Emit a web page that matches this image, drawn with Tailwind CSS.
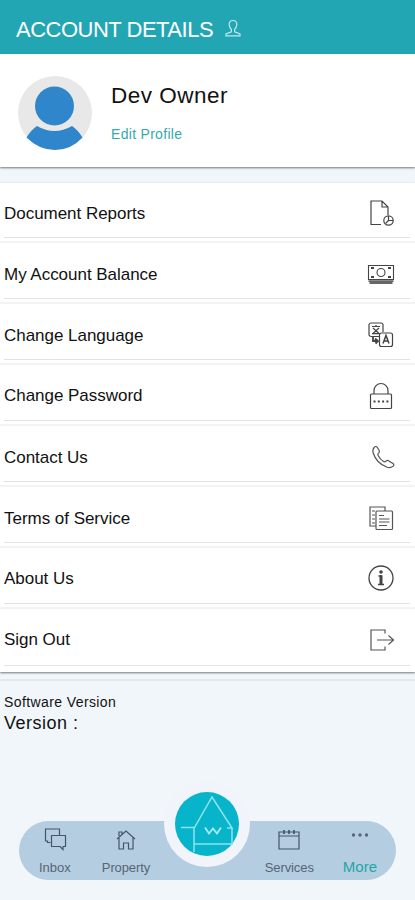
<!DOCTYPE html>
<html lang="en">
  <head>
    <meta charset="UTF-8" />
    <meta name="viewport" content="width=device-width, initial-scale=1.0" />
    <script src="https://cdn.jsdelivr.net/npm/@tailwindcss/browser@4"></script>
    <title>Account Details</title>
  </head>
  <body
    class="h-[900px] w-[415px] flex flex-col overflow-hidden bg-[#f1f6fa] font-['Liberation_Sans',Arial,sans-serif] text-[#111]"
  >
    <header class="h-[54px] shrink-0 flex items-center bg-[#23a6b3] pl-4 pt-[6px] text-white">
      <h1 class="text-[22px] leading-6 tracking-[-0.5px]">ACCOUNT DETAILS</h1>
      <svg class="ml-[11px] mb-1 h-[18px] w-[18px]" viewBox="0 0 18 18" fill="none" stroke="#c3e8ec" stroke-width="1.2">
        <path d="M9 1.500c-2.600 0-4 1.500-3.800 4 .2 2.500 1 4 2.200 5v2.300L2 15v1.800h14V15l-5.400-2.200v-2.300c1.200-1 2-2.500 2.200-5 .2-2.500-1.200-4-3.800-4z" />
      </svg>
    </header>

    <section class="h-[113px] shrink-0 flex bg-white pl-[18px] pt-[22px] shadow-[0_1px_2px_#777]">
      <svg class="h-[74px] w-[74px]" viewBox="0 0 74 74">
        <circle cx="37" cy="37" r="37" fill="#e8e8e8" />
        <circle cx="36.500" cy="30" r="19.500" fill="#2f86cb" />
        <path d="M19 50Q36.500 60 54 50Q60 54 64.500 61.500Q53 74 37 74T8.500 61.500Q13 54 19 50z" fill="#2f86cb" />
      </svg>
      <div class="ml-[19px] pt-[6px]">
        <h2 class="text-[22.5px] leading-7 tracking-[0.5px]">Dev Owner</h2>
        <a class="mt-[14px] block text-sm leading-5 tracking-[0.3px] text-[#35aaae]">Edit Profile</a>
      </div>
    </section>

    <ul class="mt-4 shrink-0 flex flex-col bg-white text-[17px] tracking-[-0.03px] shadow-[0_1px_2px_#777]">
      <li class="h-[60px] flex flex-col border-b-2 border-[#f3f3f3] pl-1 pr-[5px] pb-[3px]">
        <div class="grow flex items-center justify-between border-b border-[#e2e2e2] pr-[15px] pt-[6px]">
          <span class="pt-px">Document Reports</span>
          <svg class="h-7 w-7" viewBox="0 0 28 28" fill="none" stroke="#444" stroke-width="1.200">
            <path d="M14 25.500H4V2h11l6 6v8M15 2v6h6" />
            <circle cx="21.500" cy="21.500" r="4.700" />
            <path d="M21.500 17v4.500H26M21.500 21.500l-3 3" />
          </svg>
        </div>
      </li>
      <li class="h-[61px] flex flex-col border-b-2 border-[#f3f3f3] pl-1 pr-[5px] pb-[3px]">
        <div class="grow flex items-center justify-between border-b border-[#e2e2e2] pr-[15px] pt-[7px]">
          <span class="pt-px">My Account Balance</span>
          <svg class="h-7 w-7" viewBox="0 0 28 28" fill="none" stroke="#444" stroke-width="1.100">
            <path d="M1.500 5.500h25v14h-25z" />
            <path d="M1.500 21.200h25M2.500 23h23" stroke="#666" stroke-width="1.800" />
            <circle cx="14" cy="12.500" r="4" />
            <path d="M4 8h3M21 8h3M4 17h3M21 17h3" stroke-width="1.800" />
          </svg>
        </div>
      </li>
      <li class="h-[61px] flex flex-col border-b-2 border-[#f3f3f3] pl-1 pr-[5px] pb-[3px]">
        <div class="grow flex items-center justify-between border-b border-[#e2e2e2] pr-[15px] pt-[7px]">
          <span class="pt-[2px]">Change Language</span>
          <svg class="h-7 w-7" viewBox="0 0 28 28" fill="none" stroke="#444" stroke-width="1.200">
            <path d="M12 15.500H4a2 2 0 0 1-2-2V4a2 2 0 0 1 2-2h10a2 2 0 0 1 2 2v7" />
            <rect x="12.500" y="12" width="13" height="13.500" rx="2" />
            <path d="M5 5.500h8M9 4v1.500M6 12.500l6-5.500M6 7l6 5.500M5 12.700h8" />
            <path d="M16 22.500l3-8 3 8M17 20h4" stroke-width="1.500" />
            <path d="M6 16v4h5M8 17.500l3 2.500-2.500 2.500" stroke-width="1.800" />
          </svg>
        </div>
      </li>
      <li class="h-[61px] flex flex-col border-b-2 border-[#f3f3f3] pl-1 pr-[5px] pb-[3px]">
        <div class="grow flex items-center justify-between border-b border-[#e2e2e2] pr-[15px] pt-[6px]">
          <span class="pt-px">Change Password</span>
          <svg class="h-7 w-7" viewBox="0 0 28 28" fill="none" stroke="#444" stroke-width="1.200">
            <rect x="3.500" y="12" width="21" height="14.500" rx="1" />
            <path d="M7 12V8.500a7 7 0 0 1 14 0V12" />
            <path d="M6.500 19.500h15" stroke-width="2" stroke-dasharray="2 2.300" />
          </svg>
        </div>
      </li>
      <li class="h-[61px] flex flex-col border-b-2 border-[#f3f3f3] pl-1 pr-[5px] pb-[3px]">
        <div class="grow flex items-center justify-between border-b border-[#e2e2e2] pr-[15px] pt-[6px]">
          <span class="pt-[2px]">Contact Us</span>
          <svg class="h-7 w-7" viewBox="0 0 28 28" fill="none" stroke="#555" stroke-width="1.200">
            <path d="M7.500 4c1-.8 2-.6 2.700.3l2 3.200c.5 1 .3 1.700-.5 2.400-1 .8-1.200 1.500-.6 2.600 1.300 2.500 3 4.500 5.400 6 1 .6 1.700.5 2.500-.3.700-.9 1.600-1.100 2.500-.5l4.500 2.700c1 .7 1.200 1.500.4 2.400-1.600 1.700-4 2.300-6.300 1.500C13 21.500 8 16 6.200 10 5.500 7.600 6 5.500 7.500 4z" />
          </svg>
        </div>
      </li>
      <li class="h-[61px] flex flex-col border-b-2 border-[#f3f3f3] pl-1 pr-[5px] pb-[3px]">
        <div class="grow flex items-center justify-between border-b border-[#e2e2e2] pr-[15px] pt-[7px]">
          <span class="pt-[2px]">Terms of Service</span>
          <svg class="h-7 w-7" viewBox="0 0 28 28" fill="none" stroke="#555" stroke-width="1.200">
            <path d="M9 22H3V3h15v4" />
            <rect x="9" y="7" width="16.500" height="18.500" rx="1" />
            <path d="M5 7h3M5 11h3M5 15h3M5 19h3M12 11.500h5M12 15h10.500M12 18h10.500M12 21.500h8" />
          </svg>
        </div>
      </li>
      <li class="h-[61px] flex flex-col border-b-2 border-[#f3f3f3] pl-1 pr-[5px] pb-[3px]">
        <div class="grow flex items-center justify-between border-b border-[#e2e2e2] pr-[15px] pt-[5px]">
          <span class="pt-[2px]">About Us</span>
          <svg class="h-7 w-7" viewBox="0 0 28 28" fill="none" stroke="#444" stroke-width="1.300">
            <circle cx="14" cy="14" r="12" />
            <circle cx="14" cy="8" r="1.800" fill="#444" stroke="none" />
            <path d="M11.500 12H14v8M11 20.500h6" stroke-width="1.500" />
            <path d="M14 11.300v9" stroke-width="3" />
          </svg>
        </div>
      </li>
      <li class="h-[63px] flex flex-col pl-1 pr-[5px] pb-[6px]">
        <div class="grow flex items-center justify-between border-b border-[#e2e2e2] pr-[15px] pt-[6px]">
          <span>Sign Out</span>
          <svg class="h-7 w-7" viewBox="0 0 28 28" fill="none" stroke="#555" stroke-width="1.200">
            <path d="M18 7.500V4H4v20h14v-3.500M10 14h16M21.500 9.500l5 4.500-5 4.500" />
          </svg>
        </div>
      </li>
    </ul>

    <div class="mt-[7px] border-t-2 border-[#e4e8eb] pl-1 pt-[11px]">
      <p class="text-sm leading-5 tracking-[0.4px]">Software Version</p>
      <p class="text-[18px] leading-[22px] tracking-[0.5px]">Version :</p>
    </div>

    <nav
      class="relative mx-[19px] mb-5 mt-auto h-[59px] shrink-0 flex justify-between rounded-full bg-[#b4cde0] pl-5 pr-[19px] text-[13px] text-[#566575]"
    >
      <div class="flex gap-[31px]">
        <a class="flex flex-col items-center pt-[6px]">
          <svg class="h-6 w-6" viewBox="0 0 24 24" fill="none" stroke="#43566a" stroke-width="1.200">
            <path d="M7.500 15.500h-3v-1.500h-2v-12h14v6" />
            <path d="M8.500 8.500h14v11H20v3l-3-3H8.500z" />
          </svg>
          <span class="mt-[7px]">Inbox</span>
        </a>
        <a class="flex flex-col items-center pt-[6px]">
          <svg class="h-6 w-6" viewBox="0 0 24 24" fill="none" stroke="#43566a" stroke-width="1.200">
            <path d="M3 12l9-8 9 8M5 11v11h4.500v-6h5v6H19V11M5 9V5h3v2" />
          </svg>
          <span class="mt-[7px] tracking-[-0.1px]">Property</span>
        </a>
      </div>
      <div class="flex gap-[29px]">
        <a class="flex flex-col items-center pt-[6px]">
          <svg class="h-6 w-6" viewBox="0 0 24 24" fill="none" stroke="#43566a" stroke-width="1.200">
            <path d="M2 5h20v17H2zM2 9h20" />
            <path d="M7 3v4M12 3v4M17 3v4" stroke-width="1.700" />
          </svg>
          <span class="mt-[7px] tracking-[-0.1px]">Services</span>
        </a>
        <a class="flex flex-col items-center pt-[2px] text-[#1fa5ab]">
          <svg class="h-6 w-6" viewBox="0 0 24 24" fill="#53687c">
            <circle cx="5.500" cy="12" r="1.700" />
            <circle cx="12" cy="12" r="1.700" />
            <circle cx="18.500" cy="12" r="1.700" />
          </svg>
          <span class="mt-[9px] text-[15px]">More</span>
        </a>
      </div>
      <!-- home button over the bar -->
      <svg class="absolute -top-10 left-[145px] h-[86px] w-[86px]" viewBox="0 0 86 86" fill="none">
        <circle cx="43" cy="43" r="43" fill="#f2f4fc" />
        <circle cx="43" cy="43" r="32" fill="#08b4ca" />
        <path d="M17 46.500h13.500L48 16l20 31h-5M30 46.500V71M68 47v17M30 63h38" stroke="#8ce4ee" stroke-width="1.500" />
        <path d="M41 46.500l4 6 4-5 4 5 4-6" stroke="#a8ebf2" stroke-width="1.800" />
      </svg>
    </nav>
  </body>
</html>
